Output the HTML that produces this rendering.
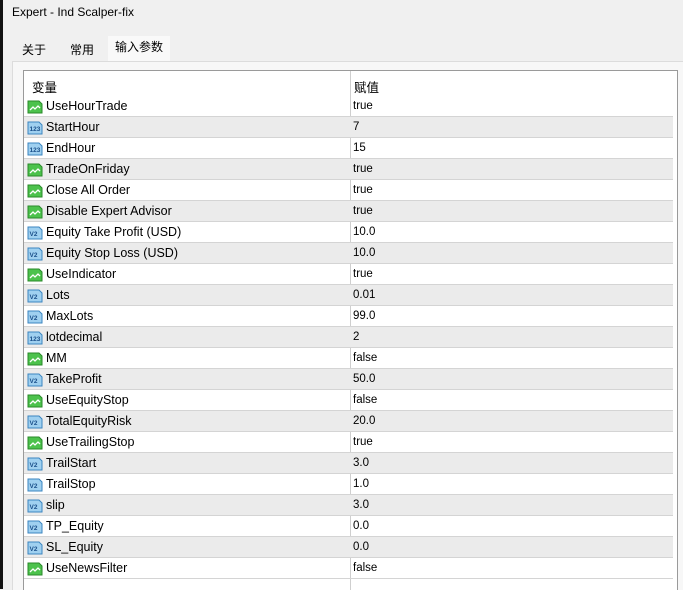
<!DOCTYPE html>
<html><head><meta charset="utf-8"><style>
body{margin:0;width:683px;height:589px;overflow:hidden;background:#f0f0f0;font-family:"Liberation Sans","Noto Sans CJK SC",sans-serif;font-size:12.5px;color:#000;position:relative}
.strip{position:absolute;left:0;top:0;width:3px;height:589px;background:#111}
.title{position:absolute;left:12px;top:5px;font-size:12px}
.tab{position:absolute;top:38px;height:22px;line-height:22px;text-align:center;font-size:12px}
.panel{position:absolute;left:12px;top:61px;width:671px;height:528px;background:#f7f7f7;border-left:1px solid #dcdcdc;border-top:1px solid #dcdcdc}
.tbl{position:absolute;left:23px;top:70px;width:653px;height:519px;background:#fff;border:1px solid #9a9a9a;border-bottom:none}
.hdr{position:absolute;left:0;top:0;height:25px;width:653px}
.hdr span{position:absolute;top:6px}
.vd{position:absolute;left:326px;top:0;width:1px;height:519px;background:#cfcfcf}
.row{position:absolute;left:0;width:649px;height:20px;border-bottom:1px solid #d4d4d4}
.row.g{background:#ebebeb}
.row .n{position:absolute;left:22px;top:3px}
.row .v{position:absolute;left:329px;top:4px;font-size:11.5px}
.row svg{position:absolute;left:3px;top:3px}
</style></head><body>
<div class="strip"></div>
<div class="title">Expert - Ind Scalper-fix</div>
<div class="tab" style="left:12px;width:44px;top:39px">关于</div>
<div class="tab" style="left:60px;width:44px;top:39px">常用</div>
<div class="tab" style="left:108px;width:62px;background:#f9f9f9;top:36px;height:25px">输入参数</div>
<div class="panel"></div>
<div class="tbl">
<div class="hdr"><span style="left:8px">变量</span><span style="left:330px">赋值</span></div>
<div class="vd"></div>
<div id="rows"></div>
</div>
<script>
var d=[["b","UseHourTrade","true"],["i","StartHour","7"],["i","EndHour","15"],["b","TradeOnFriday","true"],["b","Close All Order","true"],["b","Disable Expert Advisor","true"],["f","Equity Take Profit (USD)","10.0"],["f","Equity Stop Loss (USD)","10.0"],["b","UseIndicator","true"],["f","Lots","0.01"],["f","MaxLots","99.0"],["i","lotdecimal","2"],["b","MM","false"],["f","TakeProfit","50.0"],["b","UseEquityStop","false"],["f","TotalEquityRisk","20.0"],["b","UseTrailingStop","true"],["f","TrailStart","3.0"],["f","TrailStop","1.0"],["f","slip","3.0"],["f","TP_Equity","0.0"],["f","SL_Equity","0.0"],["b","UseNewsFilter","false"]];
var h="";
d.forEach(function(r,i){
var ic;
if(r[0]=="b")ic='<svg width="16" height="15"><path d="M1 2h11l3 3v9H1z" fill="#4cc24c" stroke="#2a8a2a"/><path d="M3 11l3-3 2 2 3-3 2 2" stroke="#fff" fill="none" stroke-width="1.3"/></svg>';
else ic='<svg width="16" height="15"><path d="M1 2h11l3 3v9H1z" fill="#9fd0f0" stroke="#3b86c0"/><text x="2.5" y="11" font-size="6.5" font-family="Liberation Sans" fill="#1a4f8a" font-weight="bold">'+(r[0]=="i"?"123":"V2")+'</text></svg>';
h+='<div class="row'+(i%2?' g':'')+'" style="top:'+(25+i*21)+'px">'+ic+'<span class="n">'+r[1]+'</span><span class="v">'+r[2]+'</span></div>';
});
document.getElementById("rows").innerHTML=h;
</script>
</body></html>
